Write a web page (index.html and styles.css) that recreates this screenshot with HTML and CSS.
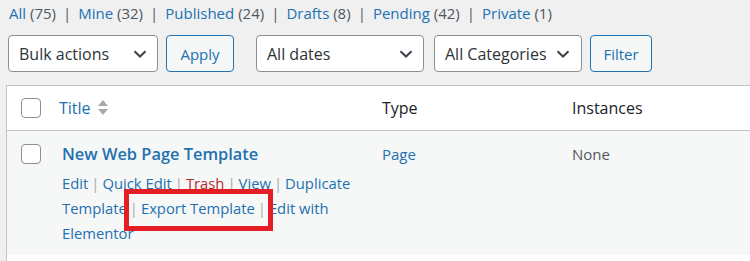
FILE: index.html
```html
<!DOCTYPE html>
<html>
<head>
<meta charset="utf-8">
<link rel="stylesheet" href="styles.css">
</head>
<body>
<ul class="subsubsub">
  <li><a>All <span class="count">(75)</span></a><span class="sep">|</span></li>
  <li><a>Mine <span class="count">(32)</span></a><span class="sep">|</span></li>
  <li><a>Published <span class="count">(24)</span></a><span class="sep">|</span></li>
  <li><a>Drafts <span class="count">(8)</span></a><span class="sep">|</span></li>
  <li><a>Pending <span class="count">(42)</span></a><span class="sep">|</span></li>
  <li><a>Private <span class="count">(1)</span></a></li>
</ul>
<div class="tablenav">
  <div class="select w-bulk"><span>Bulk actions</span><svg class="chev" width="14" height="8" viewBox="0 0 14 8"><path d="M1.5 1.2 L7 6.5 L12.5 1.2" fill="none" stroke="#3c434a" stroke-width="2"/></svg></div>
  <button class="btn w-apply">Apply</button>
  <div class="select w-dates"><span>All dates</span><svg class="chev" width="14" height="8" viewBox="0 0 14 8"><path d="M1.5 1.2 L7 6.5 L12.5 1.2" fill="none" stroke="#3c434a" stroke-width="2"/></svg></div>
  <div class="select w-cats"><span>All Categories</span><svg class="chev" width="14" height="8" viewBox="0 0 14 8"><path d="M1.5 1.2 L7 6.5 L12.5 1.2" fill="none" stroke="#3c434a" stroke-width="2"/></svg></div>
  <button class="btn w-filter">Filter</button>
</div>
<div class="table">
  <div class="row head">
    <div class="cell check"><span class="cb"></span></div>
    <div class="cell title"><a>Title</a><svg class="sort" width="10" height="20" viewBox="0 0 10 20"><path d="M0 8 L5 2 L10 8 Z M0 11 L10 11 L5 17 Z" fill="#a7aaad"/></svg></div>
    <div class="cell type">Type</div>
    <div class="cell inst">Instances</div>
  </div>
  <div class="row item">
    <div class="cell check"><span class="cb"></span></div>
    <div class="cell title">
      <a class="rowtitle">New Web Page Template</a>
      <div class="actions">
        <a>Edit</a><span class="sep">|</span><a>Quick Edit</a><span class="sep">|</span><a class="trash">Trash</a><span class="sep">|</span><a>View</a><span class="sep">|</span><a>Duplicate Template</a><span class="sep">|</span><a class="export">Export Template</a><span class="sep">|</span><a>Edit with Elementor</a>
      </div>
    </div>
    <div class="cell type"><a>Page</a></div>
    <div class="cell inst">None</div>
  </div>
  <div class="row blank"></div>
</div>
<div class="highlight"></div>
</body>
</html>
```
FILE: styles.css
```css
html, body {
  margin: 0;
  padding: 0;
}
body {
  background: #f0f0f1;
  font-family: "Open Sans", "Noto Sans", sans-serif;
  color: #3c434a;
  width: 750px;
  height: 261px;
  overflow: hidden;
  position: relative;
}
a { color: #2271b1; text-decoration: none; }

.subsubsub {
  list-style: none;
  margin: 0;
  padding: 2px 0 0 9px;
  display: flex;
  font-size: 15px;
  line-height: 22px;
  height: 32px;
  box-sizing: border-box;
}
.subsubsub .count { color: #50575e; }
.subsubsub .sep { color: #50575e; margin: 0 7px; }

.tablenav {
  display: flex;
  align-items: center;
  padding-left: 8px;
  margin-top: 3px;
  height: 37px;
}
.select {
  box-sizing: border-box;
  height: 37px;
  border: 1px solid #8c8f94;
  border-radius: 4px;
  background: #fff;
  display: flex;
  align-items: center;
  justify-content: space-between;
  padding: 0 10px 0 10px;
  font-size: 16px;
  color: #2c3338;
}
.btn {
  box-sizing: border-box;
  height: 37px;
  border: 1px solid #2271b1;
  border-radius: 4px;
  background: #f6f7f7;
  color: #2271b1;
  font-family: inherit;
  font-size: 15px;
  padding: 0;
}
.w-bulk { width: 150px; }
.w-apply { width: 68px; margin-left: 8px; }
.w-dates { width: 168px; margin-left: 22px; }
.w-cats { width: 148px; margin-left: 10px; padding-right: 11px; }
.w-filter { width: 62px; margin-left: 8px; }

.table {
  margin-top: 13px;
  margin-left: 6px;
  width: 800px;
  border: 1px solid #c3c4c7;
  border-right: none;
  border-bottom: none;
  background: #fff;
}
.row {
  display: grid;
  grid-template-columns: 47px 328px 190px 1fr;
}
.row.head {
  height: 44px;
  border-bottom: 1px solid #c3c4c7;
  align-items: center;
  font-size: 16px;
}
.row.item {
  background: #f6f7f7;
  height: 124px;
}
.row.blank { height: 10px; }
.cell.check {
  display: flex;
  justify-content: center;
}
.cb {
  display: block;
  width: 18px;
  height: 18px;
  border: 1px solid #8c8f94;
  border-radius: 4px;
  background: #fff;
  margin-left: 1px;
}
.head .title { display: flex; align-items: center; padding-left: 5px; color: #2271b1; }
.head .title .sort { margin-left: 7px; }
.head .type, .head .inst { color: #1d2327; }

.item .cell.check { padding-top: 13px; }
.item .title { padding-left: 8px; padding-top: 11px; }
.rowtitle { font-weight: 600; font-size: 16.4px; line-height: 24px; display: block; }
.actions {
  margin-top: 5px;
  font-size: 14.8px;
  line-height: 25px;
  width: 300px;
}
.actions .sep { color: #a7aaad; margin: 0 3px; }
.actions .trash { color: #b32d2e; }
.item .type, .item .inst { padding-top: 11px; font-size: 15px; line-height: 24px; }
.item .inst { color: #50575e; }

.highlight {
  position: absolute;
  left: 124px;
  top: 189px;
  width: 149px;
  height: 42px;
  box-sizing: border-box;
  border: 5px solid #e31e24;
}
```
